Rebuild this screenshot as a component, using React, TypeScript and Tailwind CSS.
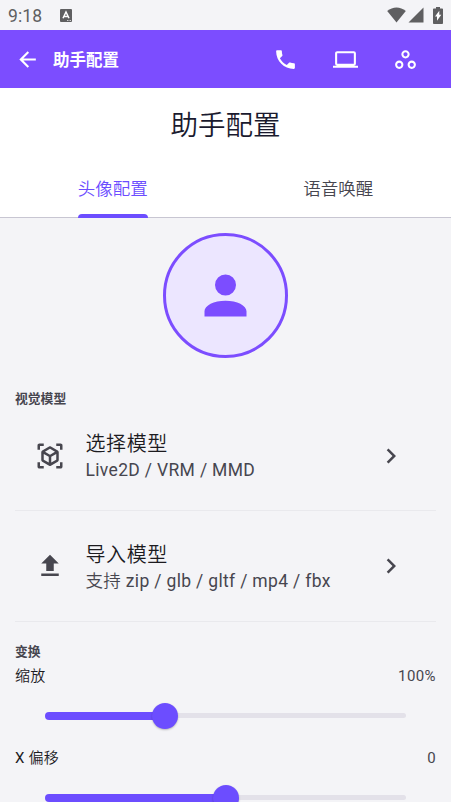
type IconProps = {
  path: string;
  className?: string;
};

const ICONS = {
  back: "M20 11v2H8l5.5 5.5-1.42 1.42L4.16 12l7.92-7.92L13.5 5.5 8 11z",
  phone:
    "M6.62 10.79c1.44 2.83 3.76 5.14 6.59 6.59l2.2-2.2c.27-.27.67-.36 1.02-.24 1.12.37 2.33.57 3.57.57.55 0 1 .45 1 1V20c0 .55-.45 1-1 1-9.39 0-17-7.61-17-17 0-.55.45-1 1-1h3.5c.55 0 1 .45 1 1 0 1.25.2 2.45.57 3.57.11.35.03.74-.25 1.02z",
  laptop:
    "M4 6h16v10H4m16 2a2 2 0 0 0 2-2V6a2 2 0 0 0-2-2H4c-1.11 0-2 .89-2 2v10a2 2 0 0 0 2 2H0v2h24v-2z",
  workspaces:
    "M6 15c1.1 0 2 .9 2 2s-.9 2-2 2-2-.9-2-2 .9-2 2-2m0-2c-2.2 0-4 1.8-4 4s1.8 4 4 4 4-1.8 4-4-1.8-4-4-4m6-8c1.1 0 2 .9 2 2s-.9 2-2 2-2-.9-2-2 .9-2 2-2m0-2C9.8 3 8 4.8 8 7s1.8 4 4 4 4-1.8 4-4-1.8-4-4-4m6 12c1.1 0 2 .9 2 2s-.9 2-2 2-2-.9-2-2 .9-2 2-2m0-2c-2.2 0-4 1.8-4 4s1.8 4 4 4 4-1.8 4-4-1.8-4-4-4",
  person: "M12 4a4 4 0 1 1 0 8 4 4 0 0 1 0-8m0 10c4.42 0 8 1.79 8 4v2H4v-2c0-2.21 3.58-4 8-4",
  cubeScan:
    "M17,22V20H20V17H22V20.5C22,20.89 21.84,21.24 21.54,21.54C21.24,21.84 20.89,22 20.5,22H17M7,22H3.5C3.11,22 2.76,21.84 2.46,21.54C2.16,21.24 2,20.89 2,20.5V17H4V20H7V22M17,2H20.5C20.89,2 21.24,2.16 21.54,2.46C21.84,2.76 22,3.11 22,3.5V7H20V4H17V2M7,2V4H4V7H2V3.5C2,3.11 2.16,2.76 2.46,2.46C2.76,2.16 3.11,2 3.5,2H7M13,17.25L17,14.95V10.36L13,12.66V17.25M12,10.92L16,8.63L12,6.28L8,8.63L12,10.92M7,14.95L11,17.25V12.66L7,10.36V14.95M18.23,7.59C18.73,7.91 19,8.34 19,8.91V15.23C19,15.8 18.73,16.23 18.23,16.55L12.75,19.73C12.25,20.05 11.75,20.05 11.25,19.73L5.77,16.55C5.27,16.23 5,15.8 5,15.23V8.91C5,8.34 5.27,7.91 5.77,7.59L11.25,4.41C11.5,4.28 11.75,4.22 12,4.22C12.25,4.22 12.5,4.28 12.75,4.41L18.23,7.59Z",
  upload: "M9,16V10H5L12,3L19,10H15V16H9M5,20V18H19V20H5Z",
  chevron: "M8.59 16.58 13.17 12 8.59 7.41 10 6l6 6-6 6z",
};

const Icon = ({ path, className }: IconProps) => (
  <svg viewBox="0 0 24 24" fill="currentColor" fillRule="evenodd" className={className}>
    <path d={path} />
  </svg>
);

const StatusBar = () => (
  <div className="flex h-[30px] items-center bg-[#f4f4f7] pl-[8px] pr-[8px] text-[#5f5f61]">
    <span className="pt-[2px] text-[17.5px] leading-[28px] tracking-[0.1px]">9:18</span>
    <svg viewBox="0 0 12 13" className="ml-[17.5px] h-[13px] w-[12px]">
      <rect width="12" height="13" rx="1" fill="#5f5f61" />
      <path d="M3 9.3 6 3l3 6.3M4.2 7.4h3.6" fill="none" stroke="#fff" strokeWidth="1.5" />
      <path d="M7 11.5h4" stroke="#fff" strokeWidth=".7" strokeDasharray="1 .5" />
    </svg>
    <div className="ml-auto flex items-center">
      <svg viewBox="0 0 19 16" className="h-[16px] w-[19px]" fill="currentColor">
        <path d="M9.5 15.5.2 4C5.7-.7 13.3-.7 18.8 4z" />
      </svg>
      <svg viewBox="0 0 16 16" className="ml-[2px] h-[16px] w-[16px]" fill="currentColor">
        <path d="M.5 15.5 15.5.5v15z" />
      </svg>
      <svg viewBox="0 0 10 17" className="ml-[9px] h-[17px] w-[10px]">
        <path d="M3 0h4v1.5h2.2q.8 0 .8.8V16q0 1-.8 1H.8Q0 17 0 16V2.300q0-.8.8-.8H3z" fill="#5f5f61" />
        <path d="M6.300 3.800v4h2L4 13.800V9.600H2z" fill="#fff" />
      </svg>
    </div>
  </div>
);

const Header = () => (
  <header className="flex h-[58px] items-center bg-[#7c4dff] pl-[15px] pr-[33px] text-white">
    <Icon path={ICONS.back} className="h-[25px] w-[25px]" />
    <h1 className="ml-[13px] pt-[4px] text-[16.5px] font-bold">助手配置</h1>
    <div className="ml-auto flex items-center gap-[35px]">
      <Icon path={ICONS.phone} className="h-[25px] w-[25px]" />
      <Icon path={ICONS.laptop} className="h-[25px] w-[25px]" />
      <Icon path={ICONS.workspaces} className="h-[25px] w-[25px]" />
    </div>
  </header>
);

const Tabs = () => (
  <nav className="flex h-[54px] border-b border-[#c8c6d2] text-[17.5px] font-[350]">
    <div className="flex flex-1 justify-center text-[#6c4dff]">
      <div className="flex h-[54px] flex-col justify-between">
        <span className="leading-[51px]">头像配置</span>
        <span className="-mt-1 h-[4px] shrink-0 rounded-t-[4px] bg-[#6c4dff]" />
      </div>
    </div>
    <div className="flex-1 text-center leading-[51px] text-[#47464f]">语音唤醒</div>
  </nav>
);

type RowProps = {
  icon: string;
  title: string;
  subtitle: string;
};

const ModelRow = ({ icon, title, subtitle }: RowProps) => (
  <div className="flex h-[110.4px] items-center border-b border-[#e9e9ed] pl-5 pr-[30px] text-[#47464f]">
    <Icon path={icon} className="h-[30px] w-[30px]" />
    <div className="ml-[20.5px] flex-1 pt-[2px]">
      <div className="text-[20px] font-[350] leading-[28px] tracking-[0.6px] text-[#1c1b1f]">{title}</div>
      <div className="font-[Roboto,'Noto_Sans_CJK_SC_DemiLight','Noto_Sans_CJK_SC',sans-serif] text-[17.5px] leading-[25px] tracking-[0.33px]">
        {subtitle}
      </div>
    </div>
    <Icon path={ICONS.chevron} className="h-[30px] w-[30px]" />
  </div>
);

type SliderProps = {
  label: string;
  value: string;
  percent: number;
};

const Slider = ({ label, value, percent }: SliderProps) => (
  <div className="h-[82px]">
    <div className="flex items-center justify-between font-[Roboto,'Noto_Sans_CJK_SC_DemiLight','Noto_Sans_CJK_SC',sans-serif] text-[15px] leading-[24px]">
      <span className="tracking-[0.2px] text-[#1c1b1f]">{label}</span>
      <span className="tracking-[0.4px] text-[#47464f]">{value}</span>
    </div>
    <div className="mx-[30px] mt-[15px] flex h-[26px] items-center">
      <div className="h-[8px] rounded-l-full bg-[#6c4dff]" style={{ width: `${percent}%` }} />
      <div className="relative -mx-[13px] h-[26px] w-[26px] shrink-0 rounded-full bg-[#6c4dff] shadow-[0_1px_2px_rgba(0,0,0,0.25)]" />
      <div className="h-[5px] flex-1 rounded-r-full bg-[#e3e1e9]" />
    </div>
  </div>
);

export default function App() {
  return (
    <div className="h-[802px] w-[451px] overflow-hidden bg-[#f4f4f7] font-[Roboto,'Noto_Sans_CJK_SC',sans-serif]">
      <StatusBar />
      <Header />
      <section className="bg-white">
        <h2 className="h-[76px] text-center text-[27.5px] font-[350] leading-[75px] text-[#1a1a2e]">助手配置</h2>
        <Tabs />
      </section>

      <main className="px-[15px] pt-[15px]">
        <div className="mx-auto flex h-[125px] w-[125px] items-center justify-center rounded-full border-3 border-[#7c4dff] bg-[#ece6ff] text-[#7c4dff]">
          <Icon path={ICONS.person} className="h-[63px] w-[63px]" />
        </div>

        <h3 className="mt-[31px] text-[12.8px] font-bold leading-[20px] text-[#47464f]">视觉模型</h3>
        <div className="-mt-[8px]">
          <ModelRow icon={ICONS.cubeScan} title="选择模型" subtitle="Live2D / VRM / MMD" />
          <ModelRow icon={ICONS.upload} title="导入模型" subtitle="支持 zip / glb / gltf / mp4 / fbx" />
        </div>

        <h3 className="mt-5 text-[12.8px] font-bold leading-[20px] text-[#47464f]">变换</h3>
        <div className="mt-[2px]">
          <Slider label="缩放" value="100%" percent={33.3} />
          <Slider label="X 偏移" value="0" percent={50} />
        </div>
      </main>
    </div>
  );
}
